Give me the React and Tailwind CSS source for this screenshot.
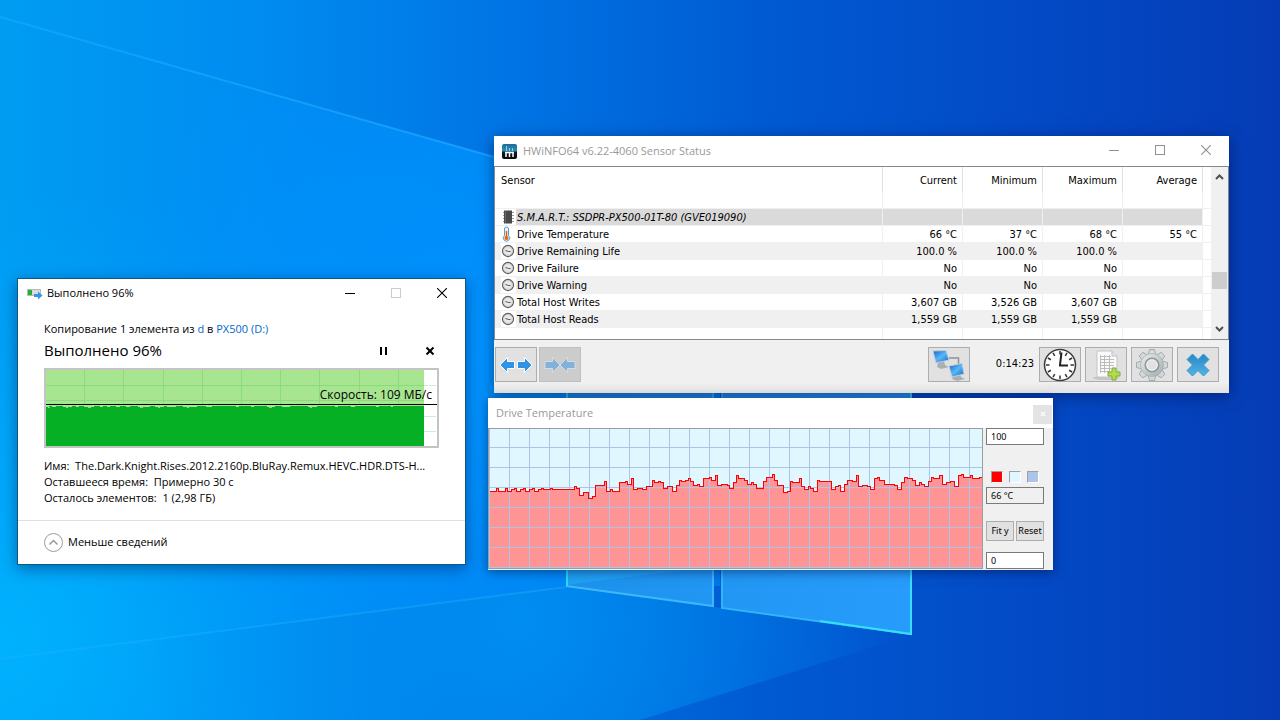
import React, { useState } from 'react';

const rows = [
  { name: 'Drive Temperature', icon: 'temp', values: ['66 °C', '37 °C', '68 °C', '55 °C'] },
  { name: 'Drive Remaining Life', icon: 'dial', values: ['100.0 %', '100.0 %', '100.0 %', ''] },
  { name: 'Drive Failure', icon: 'dial', values: ['No', 'No', 'No', ''] },
  { name: 'Drive Warning', icon: 'dial', values: ['No', 'No', 'No', ''] },
  { name: 'Total Host Writes', icon: 'dial', values: ['3,607 GB', '3,526 GB', '3,607 GB', ''] },
  { name: 'Total Host Reads', icon: 'dial', values: ['1,559 GB', '1,559 GB', '1,559 GB', ''] },
];

// [x, y] where each temperature level starts
const levels = [
  [1, 63], [8, 60], [10, 63], [17, 60], [19, 63], [23, 61], [26, 60], [28, 63], [32, 61], [35, 60], [37, 63], [41, 61],
  [44, 60], [46, 63], [50, 61], [53, 60], [55, 61], [62, 60], [64, 61], [86, 58], [88, 60], [91, 67], [95, 64], [100, 70],
  [104, 68], [107, 57], [116, 53], [118, 63], [122, 61], [124, 63], [131, 54], [137, 53], [139, 56], [143, 50], [145, 61],
  [149, 60], [154, 61], [158, 58], [164, 52], [166, 54], [170, 53], [172, 54], [175, 60], [179, 58], [184, 63], [188, 57],
  [191, 52], [193, 53], [197, 52], [200, 50], [202, 53], [205, 57], [209, 56], [211, 58], [215, 50], [221, 49], [223, 52],
  [227, 47], [229, 57], [233, 56], [239, 57], [241, 60], [245, 54], [248, 47], [250, 50], [256, 52], [259, 56], [263, 54],
  [265, 56], [268, 60], [275, 53], [278, 49], [284, 46], [286, 52], [289, 57], [295, 64], [299, 63], [302, 53], [304, 54],
  [311, 50], [313, 58], [316, 61], [320, 58], [322, 60], [325, 63], [329, 52], [331, 53], [343, 61], [347, 58], [350, 57],
  [352, 63], [356, 56], [359, 52], [364, 53], [368, 47], [370, 58], [374, 57], [379, 58], [382, 61], [386, 50], [389, 49],
  [391, 52], [396, 56], [406, 57], [409, 61], [413, 54], [416, 49], [419, 50], [424, 52], [427, 57], [431, 54], [433, 56],
  [436, 58], [440, 53], [443, 49], [445, 50], [451, 47], [454, 56], [458, 54], [462, 53], [466, 58], [470, 47], [473, 46],
  [475, 49], [482, 47], [484, 50], [491, 49],
];

const tempLine = levels
  .map(([x, y], i) => (i === 0 ? `M${x + 0.5} ${y + 0.5}` : `H${x + 0.5}V${y + 0.5}`))
  .join('') + 'H494';

const Wallpaper = () => (
  <svg className="absolute inset-0 h-full w-full" viewBox="0 0 1280 720" preserveAspectRatio="none" aria-hidden="true">
    <defs>
      <linearGradient id="sky" x1="0" y1="0" x2="1280" y2="0" gradientUnits="userSpaceOnUse">
        <stop offset="0" stopColor="#009cf2" />
        <stop offset="0.2" stopColor="#008cf0" />
        <stop offset="0.4" stopColor="#0074e4" />
        <stop offset="0.6" stopColor="#005ad2" />
        <stop offset="0.8" stopColor="#034ac6" />
        <stop offset="1" stopColor="#053cb5" />
      </linearGradient>
      <radialGradient id="corner" cx="0" cy="640" r="460" gradientUnits="userSpaceOnUse">
        <stop offset="0" stopColor="#00b4ff" stopOpacity="0.9" />
        <stop offset="1" stopColor="#00a8ff" stopOpacity="0" />
      </radialGradient>
      <radialGradient id="glow" cx="520" cy="360" r="440" gradientUnits="userSpaceOnUse">
        <stop offset="0" stopColor="#0094ff" stopOpacity="1" />
        <stop offset="0.5" stopColor="#0094ff" stopOpacity="0.7" />
        <stop offset="1" stopColor="#0094ff" stopOpacity="0" />
      </radialGradient>
      <linearGradient id="beam" x1="0" y1="0" x2="500" y2="0" gradientUnits="userSpaceOnUse">
        <stop offset="0" stopColor="#1aaeff" stopOpacity="0.5" />
        <stop offset="1" stopColor="#1ea4ff" stopOpacity="0.8" />
      </linearGradient>
      <linearGradient id="pane" x1="566" y1="0" x2="911" y2="0" gradientUnits="userSpaceOnUse">
        <stop offset="0" stopColor="#1c92ec" />
        <stop offset="1" stopColor="#289cfc" />
      </linearGradient>
      <radialGradient id="floor" cx="520" cy="620" r="380" gradientUnits="userSpaceOnUse">
        <stop offset="0" stopColor="#0090f2" stopOpacity="0.9" />
        <stop offset="0.4" stopColor="#008cf0" stopOpacity="0.6" />
        <stop offset="1" stopColor="#008cf0" stopOpacity="0" />
      </radialGradient>
    </defs>
    <rect width="1280" height="720" fill="url(#sky)" />
    <rect width="1280" height="720" fill="url(#corner)" />
    <path d="M0 17L494 157L720 230V586H566L0 660Z" fill="url(#glow)" />
    <path d="M0 660L566 586L911 635L640 720H0Z" fill="url(#floor)" />
    <path d="M0 17L494 157" stroke="url(#beam)" strokeWidth="2" />
    <path d="M0 659L566 587" stroke="#22b4ff" strokeOpacity="0.35" strokeWidth="2" />
    <path d="M566 300H714V606L566 586Z" fill="url(#pane)" />
    <path d="M721 300H911V634L721 608Z" fill="url(#pane)" />
    <path d="M566 585L700 568H566Z" fill="#2cc0ff" fillOpacity="0.3" />
    <path d="M713 300V606L566 586" fill="none" stroke="#3db8fa" strokeWidth="2" />
    <path d="M722 300V608L911 634" fill="none" stroke="#30b4fa" strokeWidth="2" />
    <path d="M567 300V586" stroke="#29dcf4" strokeWidth="2" />
    <path d="M911 300V634L820 621" fill="none" stroke="#35e0fa" strokeWidth="2" />
  </svg>
);

const CaptionButtons = ({ dim, maxDim }) => (
  <div className={`flex h-7 self-start ${dim ? 'text-[#8f8f8f]' : 'text-black'}`}>
    <button aria-label="Minimize" className="flex w-[46px] items-center justify-center">
      <svg width="10" height="10" stroke="currentColor" shapeRendering="crispEdges"><path d="M0 5.5H10" /></svg>
    </button>
    <button aria-label="Maximize" className={`flex w-[46px] items-center justify-center ${maxDim ? 'text-[#cccccc]' : ''}`}>
      <svg width="10" height="10" fill="none" stroke="currentColor" shapeRendering="crispEdges"><path d="M.5 .5H9.5V9.5H.5Z" /></svg>
    </button>
    <button aria-label="Close" className="flex w-[46px] items-center justify-center">
      <svg width="10" height="10" stroke="currentColor" strokeWidth="1.1"><path d="M0 0L10 10M10 0L0 10" /></svg>
    </button>
  </div>
);

const SpeedChart = () => (
  <div className="relative mt-2 border-2 border-[#c4c4c4] bg-white">
    <svg className="block h-[76px] w-full" viewBox="0 0 391 76" preserveAspectRatio="none" shapeRendering="crispEdges">
      <path d="M378 15.5H390M378 46.5H390M378 61.5H390" stroke="#cdeed3" />
      <rect width="378" height="76" fill="#a8e591" />
      <path d="M38.5 0V36M77.5 0V36M117.5 0V36M156.5 0V36M195.5 0V36M234.5 0V36M273.5 0V36M313.5 0V36M352.5 0V36M0 15.5H378M0 30.5H378" stroke="#8adb7b" />
      <rect y="36" width="378" height="40" fill="#06b025" />
      <path d="M0 35.5H378" stroke="#a8e591" />
      <path
        d="M0 36.5H3M6 36.5H10M17 36.5H26M30 36.5H33M38 36.5H48M54 36.5H57M61 36.5H64M70 36.5H74M80 36.5H84M92 36.5H104M109 36.5H118M121 36.5H130M137 36.5H151M160 36.5H166M190 36.5H193M205 36.5H208M221 36.5H229M236 36.5H244M262 36.5H271M289 36.5H292M305 36.5H309M330 36.5H333M345 36.5H347"
        stroke="#a8e591"
      />
      <path d="M2 37.5H4M20 37.5H22M42 37.5H45M94 37.5H97M112 37.5H114M141 37.5H143M223 37.5H226M264 37.5H266" stroke="#8adb7b" />
      <path d="M0 34.5H391" stroke="#000" />
    </svg>
    <span className="absolute right-[5px] top-[17px] text-[12px] leading-4">Скорость: 109 МБ/с</span>
  </div>
);

const CopyDialog = () => {
  const [paused, setPaused] = useState(false);

  return (
    <section className="absolute left-[17px] top-[278px] w-[449px] border border-[#11587f] bg-white font-['Open_Sans','Noto_Sans',sans-serif] text-[11px] text-black shadow-[0_4px_14px_rgba(0,20,80,0.45)]">
      <header className="flex h-[29px] items-center justify-between pl-[9px]">
        <div className="flex items-center gap-1">
          <svg width="16" height="12" viewBox="0 0 16 12">
            <rect x=".5" y="1.5" width="13" height="6" fill="#d8dcde" stroke="#b5babd" />
            <rect x="1" y="2" width="4" height="5" fill="#22b233" />
            <path d="M7 6H11V3.500L15.500 7.500L11 11.500V9H7Z" fill="#3b93e4" />
          </svg>
          <h2>Выполнено 96%</h2>
        </div>
        <CaptionButtons maxDim />
      </header>
      <div className="px-[26px] pt-[13px]">
        <p className="leading-4">
          Копирование 1 элемента из <a href="#d" className="text-[#0066cc]">d</a> в <a href="#px500" className="text-[#0066cc]">PX500 (D:)</a>
        </p>
        <div className="mt-[3px] flex h-5 items-center justify-between">
          <h1 className="text-[15px] leading-5">Выполнено 96%</h1>
          <div className="flex gap-[36px] pr-1">
            <button aria-label="Pause" onClick={() => setPaused(!paused)}>
              <svg width="10" height="9" fill="#000"><path d="M1 1H3V9H1ZM6 1H8V9H6Z" /></svg>
            </button>
            <button aria-label="Cancel">
              <svg width="10" height="9" stroke="#000" strokeWidth="2"><path d="M1.500 1.500L8.500 8.500M8.500 1.500L1.500 8.500" /></svg>
            </button>
          </div>
        </div>
        <SpeedChart />
        <div className="mt-[10px] pb-[14px] leading-4 whitespace-nowrap">
          <p>Имя:&nbsp; The.Dark.Knight.Rises.2012.2160p.BluRay.Remux.HEVC.HDR.DTS-H...</p>
          <p>Оставшееся время:&nbsp; Примерно 30 с</p>
          <p>Осталось элементов:&nbsp; 1 (2,98 ГБ)</p>
        </div>
      </div>
      <footer className="border-t border-[#dfdfdf] px-[26px] py-3">
        <button className="flex items-center gap-[5px]">
          <svg width="19" height="19" fill="none" stroke="#9a9a9a"><circle cx="9.500" cy="9.500" r="9" /><path d="M5.500 11.500L9.500 7.500L13.500 11.500" strokeWidth="1.500" /></svg>
          Меньше сведений
        </button>
      </footer>
    </section>
  );
};

const ChipIcon = () => (
  <svg width="15" height="16" className="bg-white">
    <path d="M2 3.500H13M2 6.500H13M2 9.500H13M2 12.500H13" stroke="#9a9a9a" />
    <rect x="3" y="1.500" width="8" height="13" fill="#4a4a4a" />
    <path d="M4.500 2V14" stroke="#6a6a6a" />
  </svg>
);

const ThermoIcon = () => (
  <svg width="15" height="16" className="bg-white">
    <path d="M3.500 3A2 2 0 0 1 7.500 3V9.500A3.200 3.200 0 1 1 3.500 9.500Z" fill="#e6f4fc" stroke="#5b9ac4" />
    <path d="M5.500 5V11" stroke="#e4600e" strokeWidth="1.500" />
    <circle cx="5.500" cy="12" r="2" fill="#f0640a" />
  </svg>
);

const DialIcon = () => (
  <svg width="15" height="16" className="bg-white">
    <circle cx="7" cy="8" r="5.500" fill="#e9e9e9" stroke="#606060" strokeWidth="1.300" />
    <circle cx="7" cy="8" r="4.300" fill="none" stroke="#d0d0d0" />
    <path d="M4.500 7.500L7.500 8.500H9.500" fill="none" stroke="#555" />
  </svg>
);

const icons = { temp: ThermoIcon, dial: DialIcon };

const ToolButton = ({ label, disabled, children }) => (
  <button
    aria-label={label}
    disabled={disabled}
    className={`flex h-[35px] w-[42px] items-center justify-center border ${disabled ? 'border-[#bfbfbf] bg-[#cccccc]' : 'border-[#adadad] bg-[#e1e1e1]'}`}
  >
    {children}
  </button>
);

const SensorWindow = () => (
  <section className="absolute left-[494px] top-[136px] w-[735px] bg-[#f0f0f0] font-['DejaVu_Sans_Condensed','Noto_Sans',sans-serif] text-[11px] text-black shadow-[0_3px_14px_rgba(0,10,60,0.5)]">
    <header className="flex h-[30px] items-center justify-between bg-white pl-2">
      <div className="flex items-center gap-[6px] font-['Open_Sans','Noto_Sans',sans-serif] text-[#999999]">
        <svg width="15" height="15">
          <defs>
            <linearGradient id="hw" x1="0" y1="0" x2="0" y2="1"><stop offset="0" stopColor="#1d6d96" /><stop offset="0.45" stopColor="#2b8cb8" /><stop offset="0.55" stopColor="#0c1a22" /><stop offset="1" stopColor="#06090c" /></linearGradient>
          </defs>
          <rect width="15" height="15" rx="2" fill="url(#hw)" />
          <path d="M4.500 2V7M7.500 4V7M10.500 4V7" stroke="#8fd0ee" />
          <path d="M3 8.500H12M4 8V13M7.500 8V13M11 8V13" stroke="#fff" strokeWidth="1.500" />
        </svg>
        <h2>HWiNFO64 v6.22-4060 Sensor Status</h2>
      </div>
      <CaptionButtons dim />
    </header>
    <div className="flex border border-[#828790] bg-white">
      <table className="flex-1 table-fixed border-separate border-spacing-0 text-right leading-[14px] whitespace-nowrap">
        <colgroup>
          <col />
          <col className="w-20" />
          <col className="w-20" />
          <col className="w-20" />
          <col className="w-20" />
          <col className="w-2" />
        </colgroup>
        <thead>
          <tr className="h-[25px]">
            <th className="border-r border-[#e0e0e0] p-0 pt-0.5 pl-[6px] text-left font-normal">Sensor</th>
            {['Current', 'Minimum', 'Maximum', 'Average'].map((h) => (
              <th key={h} className="border-r border-[#e0e0e0] p-0 pt-0.5 pr-[5px] font-normal">{h}</th>
            ))}
            <th className="p-0" />
          </tr>
        </thead>
        <tbody>
          <tr className="h-[17px]">
            {[0, 1, 2, 3, 4, 5].map((i) => (
              <td key={i} className={`border-b border-[#f0f0f0] p-0 ${i < 5 ? 'border-r' : ''}`} />
            ))}
          </tr>
          <tr className="h-[17px]">
            <td className="border-r border-b border-[#f0f0f0] bg-[#dadada] p-0 text-left">
              <div className="flex h-4 items-center">
                <span className="flex bg-white pl-[6px]"><ChipIcon /></span>
                <i className="pt-0.5 pl-px">S.M.A.R.T.: SSDPR-PX500-01T-80 (GVE019090)</i>
              </div>
            </td>
            {[0, 1, 2, 3].map((i) => (
              <td key={i} className="border-r border-b border-[#f0f0f0] bg-[#dadada] p-0" />
            ))}
            <td className="border-b border-[#f0f0f0] p-0" />
          </tr>
          {rows.map((row, i) => {
            const Icon = icons[row.icon];
            const bg = i % 2 ? 'bg-[#f0f0f0]' : 'bg-white';
            return (
              <tr key={row.name} className="h-[17px]">
                <td className={`border-r border-b border-[#f0f0f0] p-0 text-left ${bg}`}>
                  <div className="flex h-4 items-center pl-[6px]">
                    <Icon />
                    <span className="pt-0.5 pl-px">{row.name}</span>
                  </div>
                </td>
                {row.values.map((v, j) => (
                  <td key={j} className={`border-r border-b border-[#f0f0f0] p-0 pt-0.5 pr-[5px] ${bg}`}>{v}</td>
                ))}
                <td className="border-b border-[#f0f0f0] p-0" />
              </tr>
            );
          })}
          <tr className="h-[11px]">
            {[0, 1, 2, 3, 4, 5].map((i) => (
              <td key={i} className={`border-[#f0f0f0] p-0 ${i < 5 ? 'border-r' : ''}`} />
            ))}
          </tr>
        </tbody>
      </table>
      <div className="flex w-[17px] flex-col items-center bg-[#f0f0f0]">
        <button aria-label="Scroll up" className="flex h-5 w-full items-center justify-center">
          <svg width="9" height="6" fill="none" stroke="#505050" strokeWidth="2"><path d="M1 5L4.500 1.500L8 5" /></svg>
        </button>
        <div className="mt-[85px] h-[17px] w-[15px] bg-[#cdcdcd]" />
        <button aria-label="Scroll down" className="mt-auto flex h-5 w-full items-center justify-center">
          <svg width="9" height="6" fill="none" stroke="#505050" strokeWidth="2"><path d="M1 1L4.500 4.500L8 1" /></svg>
        </button>
      </div>
    </div>
    <div className="flex items-center justify-between bg-linear-to-b from-[#f0f0f0] from-80% to-[#e2e2e2] pt-[7px] pr-[10px] pb-[11px] pl-px">
      <div className="flex gap-0.5">
        <ToolButton label="Expand columns">
          <svg width="34" height="20" fill="#2f93e6" stroke="#fff" strokeWidth="1">
            <path d="M1 10L8.500 2.500V6.500H15.500V13.500H8.500V17.500Z" /><path d="M33 10L25.500 2.500V6.500H18.500V13.500H25.500V17.500Z" />
          </svg>
        </ToolButton>
        <ToolButton label="Collapse columns" disabled>
          <svg width="34" height="20" fill="#80b2dc" stroke="#dcdcdc" strokeWidth="1">
            <path d="M17 10L9.500 2.500V6.500H2V13.500H9.500V17.500Z" /><path d="M17 10L24.500 2.500V6.500H32V13.500H24.500V17.500Z" />
          </svg>
        </ToolButton>
      </div>
      <div className="flex items-center gap-1">
        <ToolButton label="Remote sensors">
          <svg width="34" height="32">
            <defs>
              <linearGradient id="screen" x1="0" y1="0" x2="1" y2="1"><stop offset="0" stopColor="#0d63c8" /><stop offset="0.5" stopColor="#58b7f8" /><stop offset="1" stopColor="#1465c4" /></linearGradient>
            </defs>
            <path d="M17 9H26.500V16" fill="none" stroke="#8b9298" strokeWidth="1.500" />
            <path d="M6 13L12 12L13 16L17 18L9 20L5 18Z" fill="#a9b0b5" />
            <path d="M1 2L14 1.500L17 11L4 14Z" fill="url(#screen)" stroke="#c5ccd2" />
            <path d="M22 26L28 25L29 28L33 30L25 32L20 30Z" fill="#a9b0b5" />
            <path d="M17 17L30 14.500L32 25L20 28Z" fill="url(#screen)" stroke="#c5ccd2" />
          </svg>
        </ToolButton>
        <time className="w-[61px] pr-px text-right">0:14:23</time>
        <ToolButton label="Reset clock">
          <svg width="34" height="34" viewBox="0 0 34 34">
            <circle cx="17" cy="17" r="15.500" fill="#fff" stroke="#3c3c3c" strokeWidth="1.500" />
            {[0, 30, 60, 90, 120, 150, 180, 210, 240, 270, 300, 330].map((a) => (
              <path key={a} d="M17 3V6.500" stroke="#333" strokeWidth="1.500" transform={`rotate(${a} 17 17)`} />
            ))}
            <path d="M17 17L18.500 4.500M16 17.500H25" fill="none" stroke="#222" strokeWidth="2" />
          </svg>
        </ToolButton>
        <ToolButton label="Log to file">
          <svg width="34" height="32">
            <ellipse cx="17" cy="29" rx="13" ry="2" fill="#c6c6c6" />
            <path d="M8 2H23L28 7V28H8Z" fill="#fafafa" stroke="#c4c4c4" />
            <path d="M23 2V7H28" fill="#e6e6e6" stroke="#bdbdbd" />
            <path d="M11 7.500H22M11 10.500H25M11 13.500H25M11 16.500H25M11 19.500H22M11 22.500H20M11.500 6V24M15.500 6V24M20.500 6V24" stroke="#bcbcbc" />
            <path d="M23 19H27V23H31V27H27V31H23V27H19V23H23Z" fill="#b5dc50" stroke="#7dae2c" />
          </svg>
        </ToolButton>
        <ToolButton label="Settings">
          <svg width="34" height="34" viewBox="-17 -17 34 34">
            <defs>
              <linearGradient id="steel" x1="0" y1="0" x2="1" y2="1"><stop offset="0" stopColor="#e9eded" /><stop offset="0.5" stopColor="#c6cccd" /><stop offset="1" stopColor="#a3abad" /></linearGradient>
            </defs>
            {[0, 45, 90, 135, 180, 225, 270, 315].map((a) => (
              <path key={a} d="M-4 -10L-2.500 -15.500H2.500L4 -10Z" fill="#d3d8d9" stroke="#979fa2" strokeWidth=".8" transform={`rotate(${a})`} />
            ))}
            <circle r="11.500" fill="url(#steel)" stroke="#a3abad" strokeWidth=".6" />
            <circle r="6.800" fill="none" stroke="#8e989b" strokeWidth="1.500" />
            <circle r="5.200" fill="#e1e1e1" stroke="#f4f4f4" />
          </svg>
        </ToolButton>
        <ToolButton label="Close sensors">
          <svg width="26" height="26">
            <defs>
              <linearGradient id="cross" x1="0" y1="0" x2="0" y2="1"><stop offset="0" stopColor="#2488c8" /><stop offset="1" stopColor="#55b4e6" /></linearGradient>
            </defs>
            <path d="M7.500 2L13 7.500L18.500 2L24 7.500L18.500 13L24 18.500L18.500 24L13 18.500L7.500 24L2 18.500L7.500 13L2 7.500Z" fill="url(#cross)" stroke="#3a97cf" strokeLinejoin="round" />
          </svg>
        </ToolButton>
      </div>
    </div>
  </section>
);

const TemperatureChart = () => {
  const cols = Array.from({ length: 25 }, (_, i) => 1.5 + i * 20);
  const lines = Array.from({ length: 7 }, (_, i) => 19.5 + i * 20);

  return (
    <svg className="block h-[142px] w-[495px]" viewBox="0 0 495 142" shapeRendering="crispEdges">
      <rect width="495" height="142" fill="#e0f7ff" />
      <path d={`${tempLine}V141H1Z`} fill="#ff9494" />
      {cols.map((x) => <path key={x} d={`M${x} 0V141`} stroke="#abc4e8" />)}
      {lines.map((y) => <path key={y} d={`M0 ${y}H495`} stroke="#abc4e8" />)}
      <path d={tempLine} fill="none" stroke="#f00" />
      <path d="M0 .5H495M.5 0V141M494.500 0V141M0 140.500H495" stroke="#9c9ca4" />
    </svg>
  );
};

const TemperatureWindow = () => {
  const [max, setMax] = useState('100');
  const [min, setMin] = useState('0');

  return (
    <section className="absolute left-[488px] top-[398px] w-[565px] bg-[#f0f0f0] font-['Noto_Sans','Open_Sans',sans-serif] text-[9px] text-black shadow-[0_2px_10px_rgba(0,10,60,0.5)]">
      <header className="flex h-[30px] items-center justify-between bg-white pr-px pl-2">
        <h2 className="font-['Open_Sans','Noto_Sans',sans-serif] text-[11px] text-[#999999]">Drive Temperature</h2>
        <button aria-label="Close" className="mt-0.5 flex h-[19px] w-[19px] items-center justify-center bg-[#e3e3e3]">
          <svg width="6" height="6" stroke="#fafafa" strokeWidth="1.500"><path d="M1 1L5 5M5 1L1 5" /></svg>
        </button>
      </header>
      <div className="flex gap-[3px]">
        <TemperatureChart />
        <div className="flex w-[58px] flex-col">
          <input aria-label="Maximum" value={max} onChange={(e) => setMax(e.target.value)} className="h-[17px] w-full border border-[#7a7a7a] bg-white pl-1" />
          <div className="mt-[26px] flex gap-[6px] pl-[5px]">
            <button aria-label="Line colour" className="h-3 w-3 border border-[#a0a0a0] border-r-white border-b-white bg-[#ff0000]" />
            <button aria-label="Background colour" className="h-3 w-3 border border-[#a0a0a0] border-r-white border-b-white bg-[#e0f7ff]" />
            <button aria-label="Grid colour" className="h-3 w-3 border border-[#a0a0a0] border-r-white border-b-white bg-[#abc4e8]" />
          </div>
          <input aria-label="Current value" readOnly value="66 °C" className="mt-1 h-[17px] w-full border border-[#7a7a7a] bg-[#f0f0f0] pl-1" />
          <div className="mt-[17px] flex gap-0.5">
            <button className="h-5 flex-1 border border-[#adadad] bg-[#e1e1e1] whitespace-nowrap">Fit y</button>
            <button className="h-5 flex-1 border border-[#adadad] bg-[#e1e1e1]">Reset</button>
          </div>
          <input aria-label="Minimum" value={min} onChange={(e) => setMin(e.target.value)} className="mt-[11px] h-[17px] w-full border border-[#7a7a7a] bg-white pl-1" />
        </div>
      </div>
    </section>
  );
};

const App = () => (
  <main className="relative min-h-screen overflow-hidden bg-[#0078e6]">
    <Wallpaper />
    <CopyDialog />
    <SensorWindow />
    <TemperatureWindow />
  </main>
);

export default App;
